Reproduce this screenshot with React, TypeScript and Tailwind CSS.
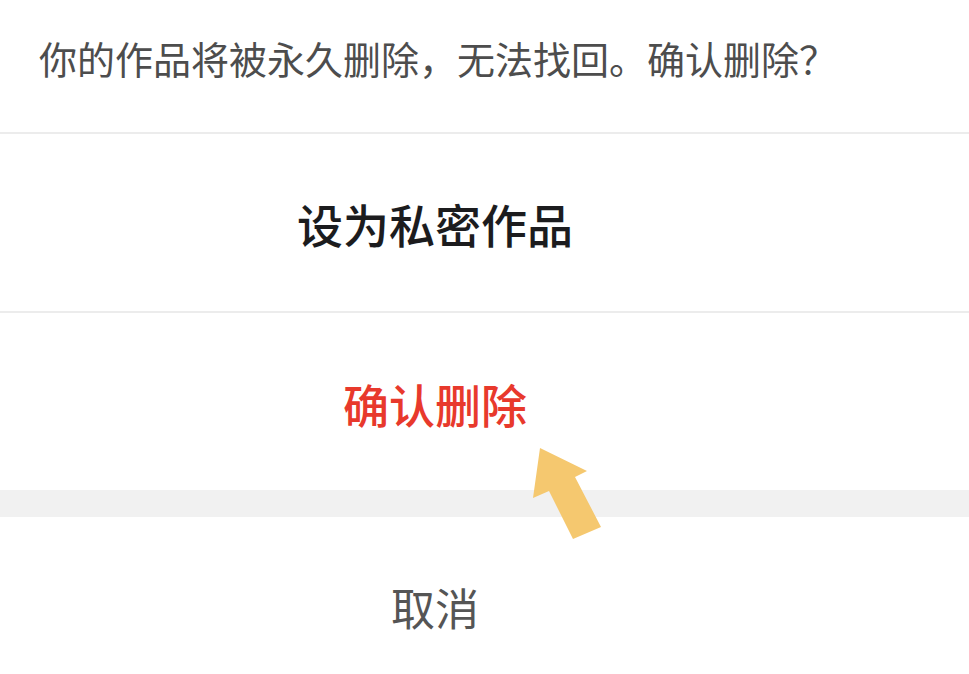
const font = { fontFamily: '"Noto Sans CJK SC", "Noto Sans", sans-serif' };

export default function App() {
  return (
    <div lang="zh-CN" className="relative w-[969px] h-[674px] overflow-hidden bg-white" style={font}>
      {/* Message */}
      <div className="h-[134px] border-b-2 border-[#ececec] pl-[39px] pt-[39px]">
        <p className="text-[38px] leading-none text-[#4d4d4d] whitespace-nowrap">
          你的作品将被永久删除，无法找回。确认删除？
        </p>
      </div>

      {/* Set private */}
      <div className="h-[179px] border-b-2 border-[#ececec] flex items-center justify-center pr-[99px]">
        <span className="text-[46px] leading-none font-medium text-[#1c1c1e]">设为私密作品</span>
      </div>

      {/* Confirm delete */}
      <div className="h-[177px] flex items-center justify-center pr-[99px]">
        <span className="text-[46px] leading-none font-medium text-[#e8392c] mt-[3px]">确认删除</span>
      </div>

      <div className="h-[27px] bg-[#f1f1f1]" />

      {/* Cancel */}
      <div className="h-[180px] flex items-center justify-center pr-[99px]">
        <span className="text-[44px] leading-none text-[#555555]">取消</span>
      </div>

      {/* Pointer arrow */}
      <svg className="absolute left-0 top-0 pointer-events-none" width="969" height="674" viewBox="0 0 969 674">
        <polygon
          points="540,448 587,471 575,477 601,527 573,539 549,491 533,498"
          fill="#f5c86f"
        />
      </svg>
    </div>
  );
}
